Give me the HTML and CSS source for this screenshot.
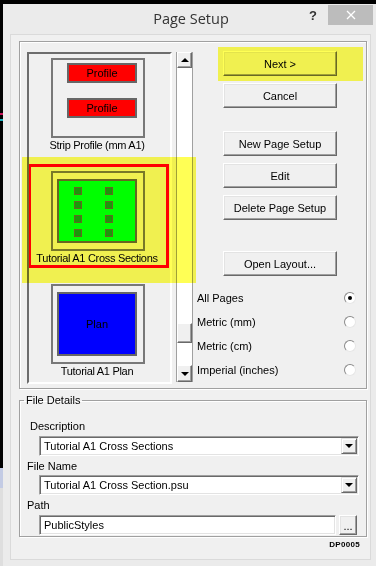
FILE: index.html
```html
<!DOCTYPE html>
<html lang="en">
<head>
    <meta charset="UTF-8">
    <meta name="viewport" content="width=device-width, initial-scale=1.0">
    <title>Page Setup</title>
    <link rel="stylesheet" href="styles.css">
</head>
<body>
    <div class="window">
        <div class="titlebar">
            <span></span>
            <div class="title">Page Setup</div>
            <div class="controls">
                <span class="help">?</span>
                <button class="close" aria-label="Close">
                    <svg width="10" height="10" viewBox="0 0 10 10">
                        <path d="M1 1 L9 9 M9 1 L1 9" stroke="#fff" stroke-width="1.3" fill="none"/>
                    </svg>
                </button>
            </div>
        </div>

        <div class="client">
            <div class="group layouts">
                <div class="listbox">
                    <div class="list-inner">
                        <div class="item">
                            <div class="card">
                                <div class="thumb">
                                    <div class="sheet sheet-red">Profile</div>
                                    <div class="sheet sheet-red second">Profile</div>
                                </div>
                                <div class="caption">Strip Profile (mm A1)</div>
                            </div>
                        </div>
                        <div class="item">
                            <div class="card selected">
                                <div class="thumb">
                                    <div class="sheet sheet-green">
                                        <span class="dot"></span><span class="dot"></span>
                                        <span class="dot"></span><span class="dot"></span>
                                        <span class="dot"></span><span class="dot"></span>
                                        <span class="dot"></span><span class="dot"></span>
                                    </div>
                                </div>
                                <div class="caption">Tutorial A1 Cross Sections</div>
                            </div>
                        </div>
                        <div class="item">
                            <div class="card">
                                <div class="thumb">
                                    <div class="sheet sheet-blue">Plan</div>
                                </div>
                                <div class="caption">Tutorial A1 Plan</div>
                            </div>
                        </div>
                    </div>
                </div>

                <div class="scrollbar">
                    <div class="sb-btn"><span class="arrow-up"></span></div>
                    <div class="sb-track"></div>
                    <div class="sb-thumb"></div>
                    <div class="sb-track lower"></div>
                    <div class="sb-btn down"><span class="arrow-down"></span></div>
                </div>

                <div class="actions">
                    <button class="btn next">Next &gt;</button>
                    <button class="btn">Cancel</button>
                    <button class="btn gap-big">New Page Setup</button>
                    <button class="btn">Edit</button>
                    <button class="btn">Delete Page Setup</button>
                    <button class="btn gap-open">Open Layout...</button>

                    <div class="radios">
                        <div class="radio-row"><span>All Pages</span><span class="radio checked"></span></div>
                        <div class="radio-row"><span>Metric (mm)</span><span class="radio"></span></div>
                        <div class="radio-row"><span>Metric (cm)</span><span class="radio"></span></div>
                        <div class="radio-row"><span>Imperial (inches)</span><span class="radio"></span></div>
                    </div>
                </div>

                <!-- highlight marks drawn over the dialog -->
                <div class="mark mark-item"></div>
                <div class="mark mark-next"></div>
            </div>

            <fieldset class="details">
                <legend>File Details</legend>
                <div class="field-label first">Description</div>
                <div class="combo">
                    <span class="combo-text">Tutorial A1 Cross Sections</span>
                    <span class="combo-btn"><span class="arrow-down"></span></span>
                </div>
                <div class="field-label">File Name</div>
                <div class="combo tight">
                    <span class="combo-text">Tutorial A1 Cross Section.psu</span>
                    <span class="combo-btn"><span class="arrow-down"></span></span>
                </div>
                <div class="field-label">Path</div>
                <div class="path-row">
                    <div class="textbox">PublicStyles</div>
                    <button class="dots">...</button>
                </div>
            </fieldset>

            <div class="code">DP0005</div>
        </div>
    </div>
</body>
</html>
```

FILE: styles.css
```css
/* Base */
* {
    margin: 0;
    padding: 0;
    box-sizing: border-box;
}

body {
    height: 566px;
    overflow: hidden;
    padding: 4px 0 0 3px;
    font-family: "Liberation Sans", Arial, sans-serif;
    font-size: 11px;
    color: #000;
    background: linear-gradient(to bottom,
        #000 0, #000 113px,
        #c8145a 113px, #c8145a 115px,
        #000 115px, #000 119px,
        #1ab0c0 119px, #1ab0c0 121px,
        #000 121px, #000 468px,
        #c3cbe4 468px, #c3cbe4 488px,
        #dedede 488px);
}

button {
    font: inherit;
    color: #000;
}

/* Window frame */
.window {
    width: 373px;
    height: 562px;
    background-color: #ebebeb;
    display: flex;
    flex-direction: column;
}

.titlebar {
    height: 30px;
    display: grid;
    grid-template-columns: 1fr auto 1fr;
}

.title {
    font-family: "Open Sans", "Noto Sans", sans-serif;
    font-size: 14.5px;
    line-height: 30px;
    color: #333;
    padding-left: 3px;
}

.controls {
    justify-self: end;
    display: flex;
    align-items: center;
    margin-top: 1px;
    height: 20px;
}

.help {
    font-weight: bold;
    font-size: 13px;
    color: #333;
    margin-right: 11px;
}

.close {
    width: 45px;
    height: 20px;
    margin-right: 3px;
    border: none;
    background-color: #bcbcbc;
    display: flex;
    align-items: center;
    justify-content: center;
}

.client {
    flex: 1;
    margin: 0 5px 6px 7px;
    border: 1px solid #dadada;
    background-color: #f0f0f0;
    padding: 6px 3px 0 8px;
}

/* Layout group */
.group {
    border: 1px solid #a0a0a0;
    box-shadow: 1px 1px 0 #fff, inset 1px 1px 0 #fff;
}

.layouts {
    position: relative;
    width: 348px;
    height: 348px;
    display: flex;
    align-items: flex-start;
    padding: 10px 0 0 7px;
}

.listbox {
    width: 145px;
    height: 332px;
    border: 2px solid;
    border-color: #6d6d6d #fff #fff #6d6d6d;
    background-color: #f0f0f0;
    overflow: hidden;
}

.list-inner {
    margin-top: -3px;
}

.item {
    height: 113px;
}

.card {
    width: 141px;
    height: 104px;
    margin-left: -1px;
    border: 3px solid transparent;
    padding-top: 4px;
    display: flex;
    flex-direction: column;
}

.card.selected {
    border-color: #f00;
}

.thumb {
    width: 94px;
    height: 80px;
    margin-left: 20px;
    border: 2px solid #787878;
}

.caption {
    line-height: 14px;
    text-align: center;
    white-space: nowrap;
    letter-spacing: -0.3px;
    padding-right: 3px;
}

.sheet {
    border: 2px solid #666;
    text-align: center;
}

.sheet-red {
    width: 70px;
    height: 20px;
    margin: 3px 0 0 14px;
    background-color: #f00;
    line-height: 16px;
}

.sheet-red.second {
    margin-top: 15px;
}

.sheet-green,
.sheet-blue {
    width: 80px;
    height: 64px;
    margin: 6px 0 0 4px;
}

.sheet-green {
    background-color: #0f0;
    display: grid;
    grid-template-columns: 8px 8px;
    grid-auto-rows: 8px;
    column-gap: 23px;
    row-gap: 6px;
    padding: 6px 0 0 15px;
}

.dot {
    background-color: #1a9a1a;
    border: 1px solid #666;
}

.sheet-blue {
    background-color: #00f;
    line-height: 60px;
}

/* Scrollbar */
.scrollbar {
    width: 17px;
    height: 330px;
    margin-left: 4px;
    border-left: 1px solid #a0a0a0;
    border-right: 1px solid #a0a0a0;
    background-color: #fff;
    display: flex;
    flex-direction: column;
}

.sb-btn,
.sb-thumb {
    background-color: #f0f0f0;
    border: 1px solid;
    border-color: #fff #696969 #696969 #fff;
    box-shadow: inset -1px -1px #a0a0a0;
}

.sb-btn {
    height: 16px;
    display: flex;
    align-items: center;
    justify-content: center;
}

.sb-btn.down {
    height: 17px;
}

.sb-track {
    flex: 1;
}

.sb-track.lower {
    flex: none;
    height: 22px;
}

.sb-thumb {
    height: 20px;
}

.arrow-up,
.arrow-down {
    width: 0;
    height: 0;
    border-left: 4px solid transparent;
    border-right: 4px solid transparent;
}

.arrow-up {
    border-bottom: 4px solid #000;
}

.arrow-down {
    border-top: 4px solid #000;
}

/* Buttons and options */
.actions {
    flex: 1;
    margin-left: 4px;
    margin-top: -1px;
    display: flex;
    flex-direction: column;
}

.btn {
    width: 114px;
    height: 25px;
    margin: 7px 0 0 26px;
    background-color: #f0f0f0;
    border: 1px solid;
    border-color: #fff #696969 #696969 #fff;
    box-shadow: inset -1px -1px #a0a0a0, inset 1px 1px #e3e3e3;
}

.btn.next {
    margin-top: 0;
}

.btn.gap-big {
    margin-top: 23px;
}

.btn.gap-open {
    margin-top: 31px;
}

.radios {
    margin-top: 10px;
}

.radio-row {
    height: 24px;
    display: flex;
    justify-content: space-between;
    align-items: center;
    padding-right: 10px;
}

.radio {
    width: 12px;
    height: 12px;
    border-radius: 50%;
    border: 1px solid;
    border-color: #8a8a8a #e6e6e6 #e6e6e6 #8a8a8a;
    background-color: #fff;
    display: flex;
    align-items: center;
    justify-content: center;
}

.radio.checked::after {
    content: "";
    width: 4px;
    height: 4px;
    border-radius: 50%;
    background-color: #000;
}

/* Yellow highlight marks */
.mark {
    position: absolute;
    background-color: #ffff55;
    mix-blend-mode: multiply;
}

.mark-item {
    left: 2px;
    top: 115px;
    width: 174px;
    height: 126px;
}

.mark-next {
    left: 198px;
    top: 5px;
    width: 145px;
    height: 34px;
}

/* File details */
.details {
    width: 348px;
    margin-top: 4px;
    border: 1px solid #a0a0a0;
    box-shadow: 1px 1px 0 #fff, inset 1px 1px 0 #fff;
    padding: 0 7px 1px 7px;
    min-width: 0;
}

.details legend {
    margin-left: -3px;
    padding: 0 2px;
    line-height: 14px;
}

.field-label {
    line-height: 14px;
    margin-top: 3px;
}

.field-label.first {
    margin: 12px 0 0 3px;
}

.combo,
.textbox {
    height: 20px;
    background-color: #fff;
    border: 1px solid;
    border-color: #a0a0a0 #fff #fff #a0a0a0;
    box-shadow: inset 1px 1px #696969, inset -1px -1px #e3e3e3;
}

.combo {
    width: 320px;
    margin: 3px 0 0 12px;
    padding: 2px 1px 2px 2px;
    display: flex;
    align-items: center;
}

.combo.tight {
    margin-top: 2px;
}

.combo-text {
    flex: 1;
    padding-left: 2px;
    white-space: nowrap;
}

.combo-btn {
    width: 16px;
    height: 16px;
    background-color: #f0f0f0;
    border: 1px solid;
    border-color: #e3e3e3 #696969 #696969 #e3e3e3;
    box-shadow: inset 1px 1px #fff, inset -1px -1px #a0a0a0;
    display: flex;
    align-items: center;
    justify-content: center;
}

.path-row {
    display: flex;
    margin: 3px 0 0 12px;
}

.textbox {
    width: 297px;
    padding-left: 4px;
    line-height: 18px;
}

.dots {
    width: 18px;
    height: 20px;
    margin-left: 3px;
    background-color: #f0f0f0;
    border: 1px solid;
    border-color: #fff #696969 #696969 #fff;
    box-shadow: inset -1px -1px #a0a0a0, inset 1px 1px #e3e3e3;
    line-height: 20px;
}

.code {
    text-align: right;
    padding-right: 7px;
    font-size: 8px;
    font-weight: bold;
    letter-spacing: 0.3px;
    line-height: 16px;
}
```
